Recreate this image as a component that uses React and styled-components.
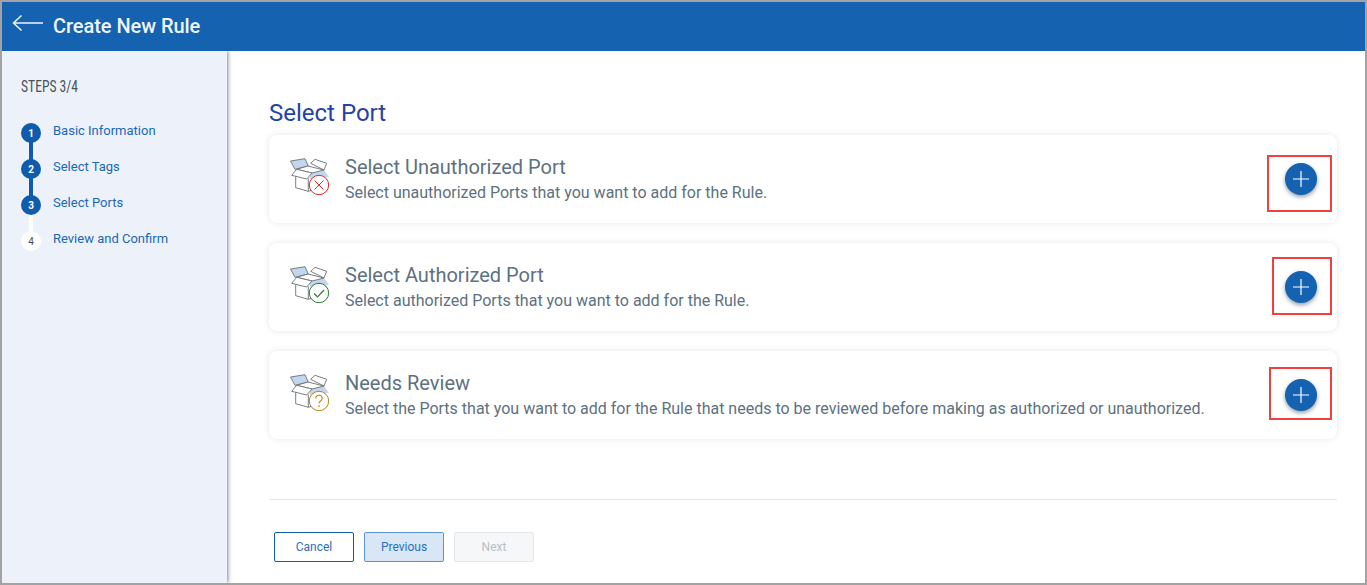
import styled, { createGlobalStyle } from 'styled-components'

const GlobalStyle = createGlobalStyle`
    html, body {
        margin: 0;
        padding: 0;
        background: #fff;
        font-family: Roboto, "Liberation Sans", sans-serif;
    }
`

const Frame = styled.div`
    width: 1367px;
    height: 585px;
    box-sizing: border-box;
    border: 2px solid #a3a3a3;
    display: flex;
    flex-direction: column;
    overflow: hidden;
    position: relative;
`

const Header = styled.header`
    height: 49px;
    flex-shrink: 0;
    background: #1462b0;
    display: flex;
    align-items: center;
    padding-left: 10px;
    gap: 9px;
    position: relative;
    z-index: 2;
`

const HeaderTitle = styled.h1`
    margin: 0 0 2px;
    color: #f0f4f9;
    font-size: 20px;
    font-weight: 500;
    letter-spacing: -0.05px;
`

const Body = styled.div`
    flex: 1;
    display: flex;
    min-height: 0;
`

const Sidebar = styled.aside`
    width: 225px;
    flex-shrink: 0;
    background: #edf2fa;
    box-shadow: 1px 0 4px rgba(60, 70, 80, 0.65);
    padding: 27px 0 0 19px;
    box-sizing: border-box;
`

const StepsLabel = styled.div`
    font-family: "Liberation Sans Narrow", "Roboto Condensed", Roboto, sans-serif;
    font-size: 16px;
    line-height: 18px;
    color: #46525c;
    margin-bottom: 25px;
    transform: scaleX(0.85);
    transform-origin: left center;
`

const StepList = styled.div`
    display: flex;
    flex-direction: column;
`

const Step = styled.div`
    height: 36px;
    display: flex;
    gap: 12px;
    position: relative;
`

const StepDot = styled.div`
    width: 20px;
    height: 20px;
    margin-top: 2px;
    border-radius: 50%;
    flex-shrink: 0;
    display: flex;
    align-items: center;
    justify-content: center;
    font-size: 10px;
    font-weight: ${(p) => (p.$done ? 700 : 400)};
    background: ${(p) => (p.$done ? '#0f5cad' : '#fff')};
    color: ${(p) => (p.$done ? '#fff' : '#4a4a4a')};
    position: relative;
    z-index: 1;
`

const StepLine = styled.div`
    position: absolute;
    left: 8px;
    top: 19px;
    width: 4px;
    height: 22px;
    background: ${(p) => (p.$done ? '#0f5cad' : '#fff')};
`

const StepName = styled.div`
    padding-top: 2px;
    font-size: 13px;
    line-height: 16px;
    color: #1a68b8;
`

const Main = styled.main`
    flex: 1;
    padding: 48px 28px 0 42px;
    display: flex;
    flex-direction: column;
    min-width: 0;
`

const PageTitle = styled.h2`
    margin: 0 0 8px;
    font-size: 24px;
    line-height: 28px;
    font-weight: 400;
    color: #2443a8;
`

const CardList = styled.div`
    display: flex;
    flex-direction: column;
    gap: 20px;
`

const Card = styled.section`
    height: 88px;
    box-sizing: border-box;
    border-radius: 8px;
    background: #fff;
    box-shadow: 0 0 6px rgba(0, 0, 0, 0.1);
    display: flex;
    align-items: center;
    padding: 0 20px 0 21px;
`

const CardIcon = styled.svg`
    width: 42px;
    height: 38px;
    flex-shrink: 0;
    margin: 0 13px 7px 0;
`

const CardText = styled.div`
    flex: 1;
    min-width: 0;
`

const CardTitle = styled.div`
    font-size: 20px;
    line-height: 24px;
    color: #5d7180;
`

const CardDesc = styled.div`
    font-size: 16px;
    line-height: 20px;
    margin-top: 4px;
    color: #5d7180;
`

const AddButton = styled.button`
    width: 32px;
    height: 32px;
    padding: 0;
    border: none;
    border-radius: 50%;
    background: #1462b0;
    box-shadow: 0 2px 4px rgba(40, 60, 80, 0.5);
    display: flex;
    align-items: center;
    justify-content: center;
`

const Highlight = styled.div`
    position: absolute;
    box-sizing: border-box;
    border: 2px solid #f04040;
    pointer-events: none;
`

const Divider = styled.hr`
    margin: 60px 0 0;
    border: none;
    border-top: 1px solid #e2e4e6;
`

const Footer = styled.div`
    display: flex;
    gap: 10px;
    margin: 32px 0 0 5px;
`

const FooterButton = styled.button`
    width: 80px;
    height: 30px;
    box-sizing: border-box;
    border-radius: 2px;
    font-family: Roboto, "Liberation Sans", sans-serif;
    font-size: 12px;
    padding: 0;
    border: 1px solid ${(p) => ({ outline: '#0f5cad', soft: '#5a93cf', off: '#e4e8ec' }[p.$kind])};
    background: ${(p) => ({ outline: '#fff', soft: '#d8e6f5', off: '#f5f7f9' }[p.$kind])};
    color: ${(p) => ({ outline: '#2a70ba', soft: '#2a70ba', off: '#b8c0c8' }[p.$kind])};
`

const BackArrowIcon = styled.svg`
    margin-top: -8px;
`

const BackArrow = () => (
    <BackArrowIcon width="32" height="18" viewBox="0 0 32 18" fill="none" stroke="#f0f4f9" strokeWidth="1.5">
        <path d="M1.5 9H31M9.5 1.5L1.5 9l8 7.5" />
    </BackArrowIcon>
)

const Badge = ({ kind }) => {
    const color = { cross: '#e8281f', check: '#2f7d32', help: '#b5860f' }[kind]
    return (
        <g fill="none" stroke={color}>
            <circle cx="29" cy="28" r="9.7" fill="#fff" strokeWidth="1" />
            {kind === 'cross' && <path d="M24.5 23.5l9 9M33.5 23.5l-9 9" strokeWidth="1" />}
            {kind === 'check' && <path d="M24 28.5l3.5 3.5 6.5-7" strokeWidth="1.2" />}
            {kind === 'help' && (
                <>
                    <path d="M25.8 25.5c0-2 1.4-3.2 3.2-3.2s3.2 1.2 3.2 3c0 2.7-3.2 2.7-3.2 5.2" strokeWidth="1.1" />
                    <path d="M29 32.3v1.6" strokeWidth="1.2" />
                </>
            )}
        </g>
    )
}

const BoxIcon = ({ kind }) => (
    <CardIcon viewBox="0 0 42 38">
        <g fill="none" stroke="#6a7075" strokeWidth="0.9">
            <path d="M18 9l16 4 5 7-19 2z" fill="#c2d7ee" stroke="none" />
            <path d="M0.5 4L15 1.7 18.3 9 5 12.3z" fill="#c2d7ee" />
            <path d="M20.7 6.3L25 2.3l11.7 4L34 13z" fill="#fff" />
            <path d="M6.7 12.3L18 9l16 4-12 3z" fill="#fff" />
            <path d="M6.7 12.3L1.7 18.3 16.7 22 22 16z" fill="#fff" />
            <path d="M5.7 19.5v11.2l12.6 3.6 4-1.2M18.3 34.3V21.5" />
        </g>
        <Badge kind={kind} />
    </CardIcon>
)

const steps = [
    { n: 1, name: 'Basic Information', done: true, line: true },
    { n: 2, name: 'Select Tags', done: true, line: true },
    { n: 3, name: 'Select Ports', done: true },
    { n: 4, name: 'Review and Confirm' },
]

const cards = [
    {
        kind: 'cross',
        title: 'Select Unauthorized Port',
        desc: 'Select unauthorized Ports that you want to add for the Rule.',
    },
    {
        kind: 'check',
        title: 'Select Authorized Port',
        desc: 'Select authorized Ports that you want to add for the Rule.',
    },
    {
        kind: 'help',
        title: 'Needs Review',
        desc: 'Select the Ports that you want to add for the Rule that needs to be reviewed before making as authorized or unauthorized.',
    },
]

const marks = [
    { left: 1265, top: 153, width: 65, height: 57 },
    { left: 1270, top: 255, width: 60, height: 58 },
    { left: 1267, top: 365, width: 63, height: 53 },
]

const App = () => {
    return (
        <Frame>
            <GlobalStyle />
            <Header>
                <BackArrow />
                <HeaderTitle>Create New Rule</HeaderTitle>
            </Header>
            <Body>
                <Sidebar>
                    <StepsLabel>STEPS 3/4</StepsLabel>
                    <StepList>
                        {steps.map((step) => (
                            <Step key={step.n}>
                                <StepDot $done={step.done}>{step.n}</StepDot>
                                {step.n < 4 && <StepLine $done={step.line} />}
                                <StepName>{step.name}</StepName>
                            </Step>
                        ))}
                    </StepList>
                </Sidebar>
                <Main>
                    <PageTitle>Select Port</PageTitle>
                    <CardList>
                        {cards.map((card) => (
                            <Card key={card.kind}>
                                <BoxIcon kind={card.kind} />
                                <CardText>
                                    <CardTitle>{card.title}</CardTitle>
                                    <CardDesc>{card.desc}</CardDesc>
                                </CardText>
                                <AddButton aria-label="Add">
                                    <svg width="16" height="16" viewBox="0 0 16 16" stroke="#fff" strokeWidth="1.2">
                                        <path d="M8 0v16M0 8h16" />
                                    </svg>
                                </AddButton>
                            </Card>
                        ))}
                    </CardList>
                    <Divider />
                    <Footer>
                        <FooterButton $kind="outline">Cancel</FooterButton>
                        <FooterButton $kind="soft">Previous</FooterButton>
                        <FooterButton $kind="off" disabled>Next</FooterButton>
                    </Footer>
                </Main>
            </Body>
            {marks.map((m) => (
                <Highlight key={m.top} style={m} />
            ))}
        </Frame>
    )
}

export default App
